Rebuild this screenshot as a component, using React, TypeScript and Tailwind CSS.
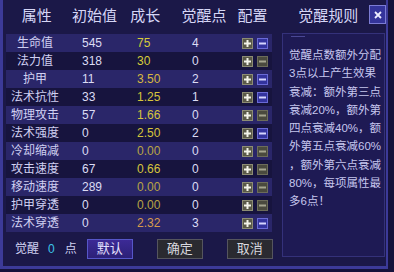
import React from 'react';

type Row = { name: string; base: string; grow: string; pts: number; growColor: string };

const ROWS: Row[] = [
  { name: '生命值', base: '545', grow: '75', pts: 4, growColor: 'text-[#d6cc3a]' },
  { name: '法力值', base: '318', grow: '30', pts: 0, growColor: 'text-[#d6cc3a]' },
  { name: '护甲', base: '11', grow: '3.50', pts: 2, growColor: 'text-[#d8b840]' },
  { name: '法术抗性', base: '33', grow: '1.25', pts: 1, growColor: 'text-[#d6c43c]' },
  { name: '物理攻击', base: '57', grow: '1.66', pts: 0, growColor: 'text-[#d6c43c]' },
  { name: '法术强度', base: '0', grow: '2.50', pts: 2, growColor: 'text-[#d6c43c]' },
  { name: '冷却缩减', base: '0', grow: '0.00', pts: 0, growColor: 'text-[#b8a444]' },
  { name: '攻击速度', base: '67', grow: '0.66', pts: 0, growColor: 'text-[#d6c43c]' },
  { name: '移动速度', base: '289', grow: '0.00', pts: 0, growColor: 'text-[#b8a444]' },
  { name: '护甲穿透', base: '0', grow: '0.00', pts: 0, growColor: 'text-[#b8a444]' },
  { name: '法术穿透', base: '0', grow: '2.32', pts: 3, growColor: 'text-[#d89a4c]' },
];

const RULES = [
  '觉醒点数额外分配',
  '3点以上产生效果',
  '衰减：额外第三点',
  '衰减20%，额外第',
  '四点衰减40%，额',
  '外第五点衰减60%',
  '，额外第六点衰减',
  '80%，每项属性最',
  '多6点！',
];

function PlusBtn() {
  return (
    <span className="flex h-[11px] w-[11px] items-center justify-center border border-[#8c8c74] bg-[#5a5948]">
      <svg width="9" height="9" viewBox="0 0 9 9">
        <path d="M4.5 1v7M1 4.5h7" stroke="#f4f4ea" strokeWidth="2" />
      </svg>
    </span>
  );
}

function MinusBtn({ active }: { active: boolean }) {
  return (
    <span
      className={
        active
          ? 'flex h-[11px] w-[11px] items-center justify-center border border-[#6a6ad6] bg-[#33339e]'
          : 'flex h-[11px] w-[11px] items-center justify-center border border-[#6c6c5a] bg-[#4a4a3e]'
      }
    >
      <svg width="9" height="9" viewBox="0 0 9 9">
        <path d="M1 4.5h7" stroke={active ? '#d6d6ff' : '#a6a690'} strokeWidth="2" />
      </svg>
    </span>
  );
}

export default function App() {
  return (
    <div className="h-[272px] w-[394px] overflow-hidden bg-[#15123a] font-['Liberation_Sans','Noto_Sans_CJK_SC',sans-serif] text-[#d2d2f2]">
      <div className="h-[269px] w-[388px] border-b-[3px] border-l-[3px] border-r-2 border-[#3c3a98] bg-[#1b1848]">
        {/* header */}
        <div className="flex h-[33px] items-center text-[15px] text-[#d6d6f6]">
          <span className="w-[68px] text-center">属性</span>
          <span className="w-[48px] text-center">初始值</span>
          <span className="w-[54px] text-center">成长</span>
          <span className="w-[64px] text-center">觉醒点</span>
          <span className="w-[34px] text-center">配置</span>
          <span className="w-[100px] pl-[18px] text-center">觉醒规则</span>
          <span className="-mt-[4px] flex h-[19px] w-[17px] items-center justify-center border border-[#7c7cd4] bg-[#34349a]">
            <svg width="10" height="10" viewBox="0 0 10 10">
              <path d="M2 2l6 6M8 2l-6 6" stroke="#ececff" strokeWidth="1.8" />
            </svg>
          </span>
        </div>

        <div className="flex">
          {/* left: table + buttons */}
          <div className="w-[279px] pl-[3px]">
            <div className="mt-px w-[266px]">
              {ROWS.map((r, i) => (
                <div
                  key={r.name}
                  className={
                    i % 2 === 0
                      ? 'flex h-[18px] items-center bg-[#2a2669] text-[12px]'
                      : 'flex h-[18px] items-center bg-[#17143e] text-[12px]'
                  }
                >
                  <span className="w-[58px] text-center text-[#d0d0f2]">{r.name}</span>
                  <span className="w-[73px] pl-[18px] text-[#dcdcf4]">{r.base}</span>
                  <span className={`w-[55px] ${r.growColor}`}>{r.grow}</span>
                  <span className="w-[50px] text-[#dcdcf4]">{r.pts}</span>
                  <span className="flex gap-[4px]">
                    <PlusBtn />
                    <MinusBtn active={r.pts > 0} />
                  </span>
                </div>
              ))}
            </div>

            <div className="mt-[7px] flex h-[20px] items-center text-[12px]">
              <span className="ml-[9px] text-[#cfcff0]">觉醒</span>
              <span className="ml-[9px] text-[#3cc4e8]">0</span>
              <span className="ml-[10px] text-[#cfcff0]">点</span>
              <button className="ml-[10px] flex h-[20px] w-[46px] items-center justify-center border border-[#5656c8] bg-gradient-to-b from-[#3c2a96] to-[#2c2078] text-[13px] text-[#e4e0ff]">
                默认
              </button>
              <button className="ml-[24px] flex h-[20px] w-[46px] items-center justify-center border border-[#55555e] bg-[#2a2a30] text-[13px] text-[#d8d8de]">
                确定
              </button>
              <button className="ml-[24px] flex h-[20px] w-[46px] items-center justify-center border border-[#55555e] bg-[#2a2a30] text-[13px] text-[#d8d8de]">
                取消
              </button>
            </div>
          </div>

          {/* right: rules panel */}
          <div className="h-[224px] w-[103px] border border-[#34317a] bg-[#1e1a54] pl-[6px] pt-[2px]">
            <div className="ml-[2px] h-px w-[14px] bg-[#4a4894]" />
            <div className="mt-[9px] whitespace-nowrap text-[11.5px] leading-[18.25px] text-[#c6c6ee]">
              {RULES.map((line) => (
                <div key={line}>{line}</div>
              ))}
            </div>
          </div>
        </div>
      </div>
    </div>
  );
}
